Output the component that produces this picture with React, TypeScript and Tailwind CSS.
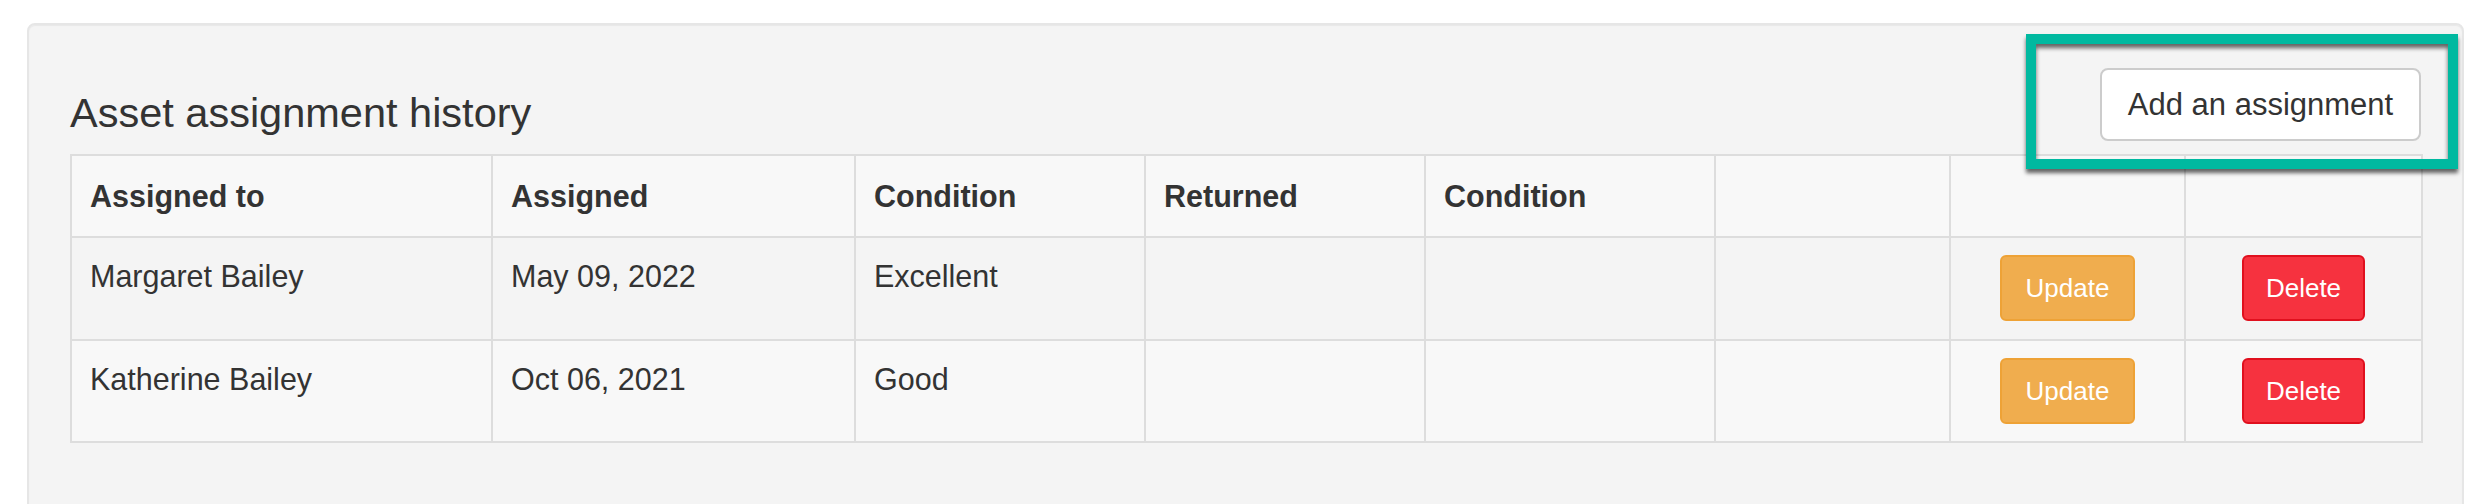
export default function App() {
  const rows = [
    { name: "Margaret Bailey", assigned: "May 09, 2022", cond: "Excellent", bg: "bg-[#f4f4f4]", h: "h-[103px]" },
    { name: "Katherine Bailey", assigned: "Oct 06, 2021", cond: "Good", bg: "bg-[#f8f8f8]", h: "h-[102px]" },
  ];
  const th = "border-2 border-[#dddddd] px-[18px] pt-[19px] align-top text-left font-bold text-[30.5px] leading-[43px]";
  const td = "border-2 border-[#dddddd] px-[18px] pt-[17px] align-top text-[30.5px] leading-[43px]";
  return (
    <div className="relative h-[504px] w-full overflow-hidden bg-white text-[#333333] font-['Liberation_Sans',Arial,sans-serif]">
      <div className="ml-[27px] mr-[8px] mt-[23px] h-[540px] rounded-[8px] border-2 border-[#e6e6e6] bg-[#f4f4f4] px-[41px] pt-[41px] shadow-[inset_0_1px_1px_rgba(0,0,0,0.05)]">
        <div className="mb-[13px] flex items-end justify-between pt-[2px]">
          <h3 className="mb-[6px] text-[41.5px] leading-[45px] font-normal">Asset assignment history</h3>
          <button className="h-[73px] w-[321px] rounded-[8px] border-2 border-[#cccccc] bg-white text-center text-[31px] leading-none text-[#333333]">
            Add an assignment
          </button>
        </div>
        <table className="w-full table-fixed border-collapse border-2 border-[#dddddd]">
          <colgroup>
            <col className="w-[421px]" />
            <col className="w-[363px]" />
            <col className="w-[290px]" />
            <col className="w-[280px]" />
            <col className="w-[290px]" />
            <col className="w-[235px]" />
            <col className="w-[235px]" />
            <col className="w-[237px]" />
          </colgroup>
          <thead>
            <tr className="h-[82px] bg-[#f8f8f8]">
              <th className={th}>Assigned to</th>
              <th className={th}>Assigned</th>
              <th className={th}>Condition</th>
              <th className={th}>Returned</th>
              <th className={th}>Condition</th>
              <th className={th}></th>
              <th className={th}></th>
              <th className={th}></th>
            </tr>
          </thead>
          <tbody>
            {rows.map((r) => (
              <tr key={r.name} className={`${r.h} ${r.bg}`}>
                <td className={td}>{r.name}</td>
                <td className={td}>{r.assigned}</td>
                <td className={td}>{r.cond}</td>
                <td className={td}></td>
                <td className={td}></td>
                <td className={td}></td>
                <td className={`${td} text-center`}>
                  <button className="h-[66px] w-[135px] rounded-[6px] border-2 border-[#eea236] bg-[#f0ad4e] text-[26px] leading-none text-white">
                    Update
                  </button>
                </td>
                <td className={`${td} text-center`}>
                  <button className="h-[66px] w-[123px] rounded-[6px] border-2 border-[#e0101e] bg-[#f6323f] text-[26px] leading-none text-white">
                    Delete
                  </button>
                </td>
              </tr>
            ))}
          </tbody>
        </table>
      </div>
      <div className="pointer-events-none absolute left-[2026px] top-[34px] h-[135px] w-[432px] border-[10px] border-[#00b9a0] shadow-[0_4px_4px_rgba(0,0,0,0.6),inset_0_4px_4px_rgba(0,0,0,0.6)]" />
    </div>
  );
}
